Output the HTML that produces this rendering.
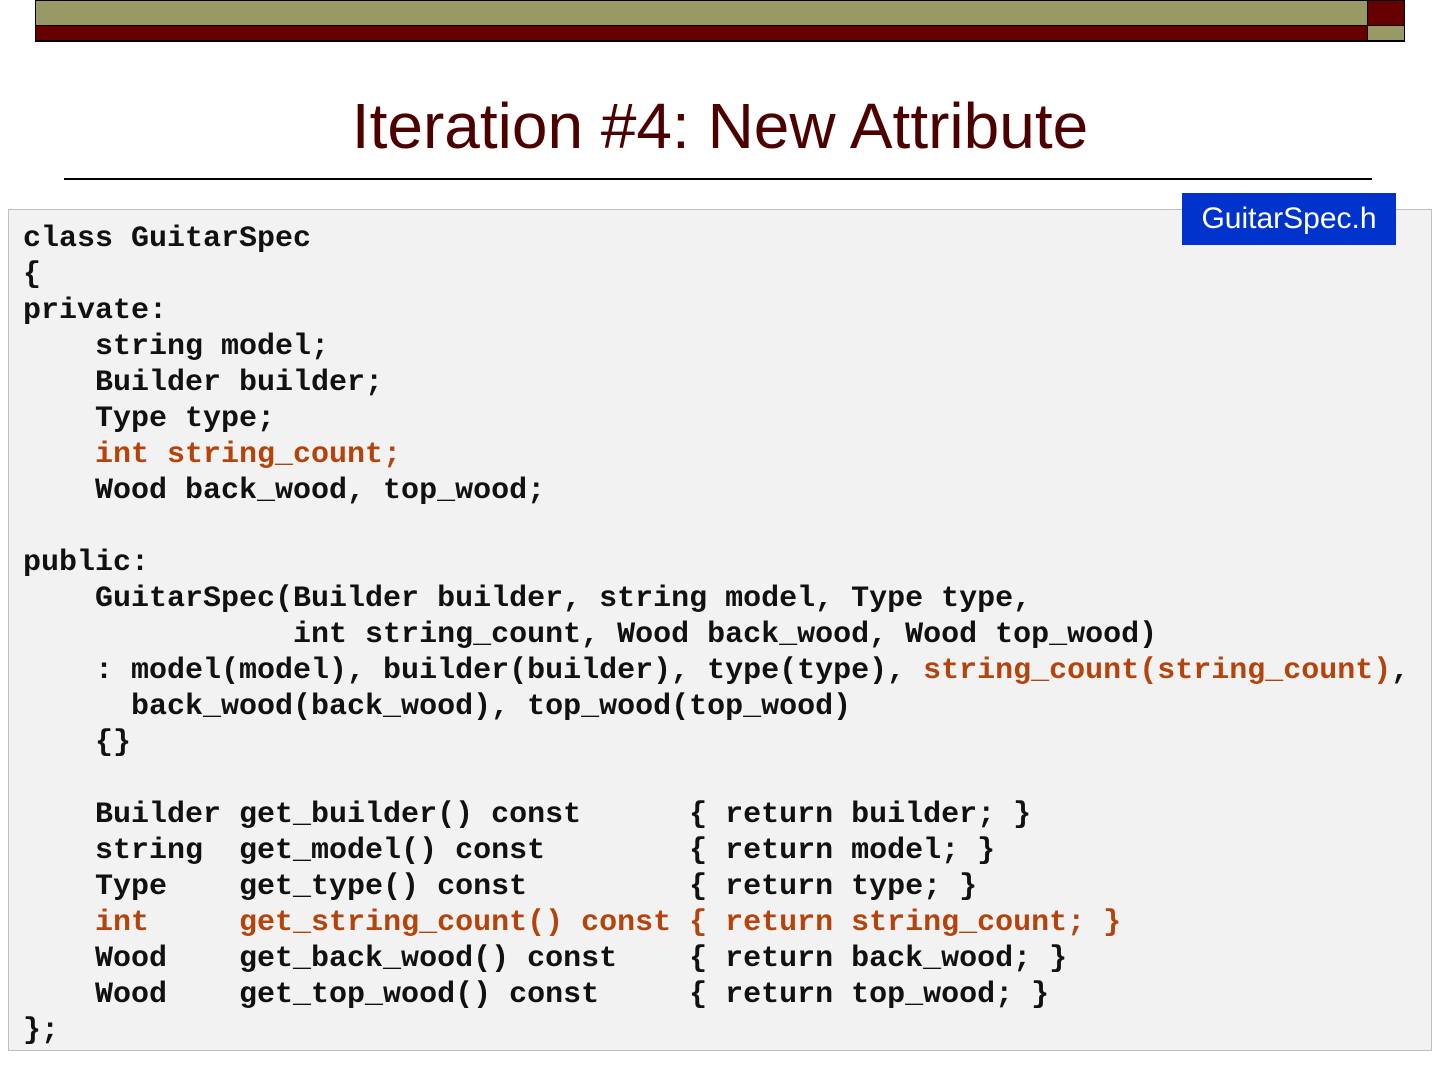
<!DOCTYPE html>
<html><head><meta charset="utf-8"><style>
body{margin:0;width:1440px;height:1080px;background:#fff;position:relative;overflow:hidden;font-family:"Liberation Sans",sans-serif}
.a{position:absolute}
pre{position:absolute;left:23px;top:221px;margin:0;font-family:"Liberation Mono",monospace;font-weight:bold;font-size:30px;line-height:36px;color:#111}
.o{color:#b5440c}
</style></head><body>
<div class="a" style="left:35px;top:0;width:1333px;height:26px;background:#999966;border:1px solid #000;box-sizing:border-box"></div>
<div class="a" style="left:35px;top:25px;width:1333px;height:17px;background:#660000;border:1px solid #000;border-bottom-width:2px;box-sizing:border-box"></div>
<div class="a" style="left:1367px;top:0;width:38px;height:26px;background:#660000;border:1px solid #000;box-sizing:border-box"></div>
<div class="a" style="left:1367px;top:25px;width:38px;height:17px;background:#999966;border:1px solid #000;border-bottom-width:2px;box-sizing:border-box"></div>
<div class="a" style="left:0;width:1440px;top:87px;text-align:center;font-size:64px;color:#4d0000;line-height:78px">Iteration #4: New Attribute</div>
<div class="a" style="left:64px;top:178px;width:1308px;height:2px;background:#000"></div>
<div class="a" style="left:8px;top:209px;width:1424px;height:842px;background:#f2f2f2;border:1px solid #c0c0c0;box-sizing:border-box"></div>
<div class="a" style="left:1182px;top:193px;width:214px;height:52px;background:#0033cc;color:#fff;font-size:30px;line-height:52px;text-align:center">GuitarSpec.h</div>
<pre>class GuitarSpec
{
private:
    string model;
    Builder builder;
    Type type;
    <span class="o">int string_count;</span>
    Wood back_wood, top_wood;

public:
    GuitarSpec(Builder builder, string model, Type type,
               int string_count, Wood back_wood, Wood top_wood)
    : model(model), builder(builder), type(type), <span class="o">string_count(string_count)</span>,
      back_wood(back_wood), top_wood(top_wood)
    {}

    Builder get_builder() const      { return builder; }
    string  get_model() const        { return model; }
    Type    get_type() const         { return type; }
    <span class="o">int     get_string_count() const { return string_count; }</span>
    Wood    get_back_wood() const    { return back_wood; }
    Wood    get_top_wood() const     { return top_wood; }
};</pre>
</body></html>
